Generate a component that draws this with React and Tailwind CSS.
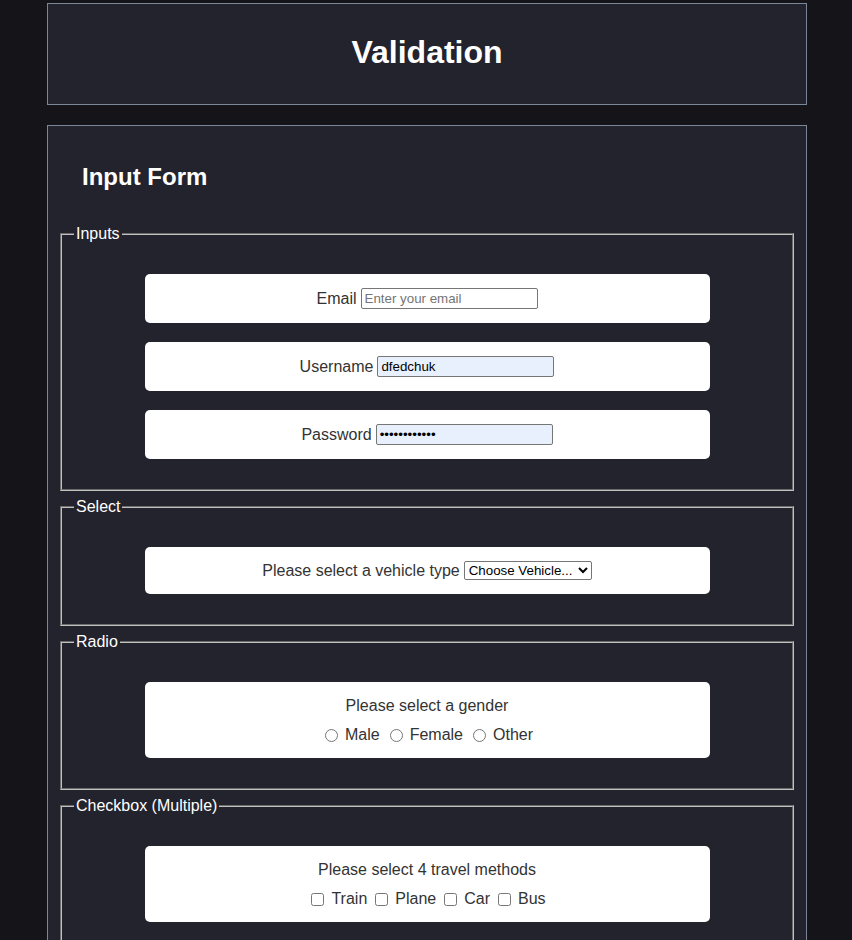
import React from "react";

function Fieldset({ legend, children }) {
  return (
    <fieldset className="border-2 [border-style:groove] border-[#c0c0c0] px-[12px] pt-[31px] pb-[30px]">
      <legend className="px-[2px] text-[16px] leading-[18px] text-white">{legend}</legend>
      {children}
    </fieldset>
  );
}

const inputCls =
  "w-[177px] h-[21px] border border-[#767676] rounded-[2px] px-[3px] text-[13.33px] text-black outline-none placeholder:text-[#757575] font-['Liberation_Sans',Arial,sans-serif]";

function Row({ label, children }) {
  return (
    <div className="mx-auto flex h-[49px] w-[565px] items-center justify-center gap-[4px] rounded-[5px] bg-white text-[16px] leading-[18px] text-[#333]">
      <span>{label}</span>
      {children}
    </div>
  );
}

export default function App() {
  return (
    <div className="min-h-screen bg-[#151519] pt-[3px] pb-[20px] font-['Liberation_Sans',Arial,sans-serif]">
      <div className="ml-[47px] h-[102px] w-[760px] border border-[#7b8797] bg-[#23232d] pt-[28px] text-center">
        <h1 className="text-[32px] font-bold leading-[40px] text-white">Validation</h1>
      </div>

      <div className="ml-[47px] mt-[20px] w-[760px] border border-[#7b8797] bg-[#23232d] px-[12px] pt-[35px] pb-[13px]">
        <h2 className="ml-[22px] text-[24px] font-bold leading-[32px] text-white">Input Form</h2>

        <div className="mt-[32px] flex flex-col gap-[7px]">
          <Fieldset legend="Inputs">
            <div className="flex flex-col gap-[19px]">
              <Row label="Email">
                <input type="email" placeholder="Enter your email" className={inputCls + " bg-white"} />
              </Row>
              <Row label="Username">
                <input type="text" defaultValue="dfedchuk" className={inputCls + " bg-[#e8f0fe]"} />
              </Row>
              <Row label="Password">
                <input type="password" defaultValue="dfedchuk1234" className={inputCls + " bg-[#e8f0fe]"} />
              </Row>
            </div>
          </Fieldset>

          <Fieldset legend="Select">
            <div className="mx-auto flex h-[47px] w-[565px] items-center justify-center gap-[4px] rounded-[5px] bg-white text-[16px] leading-[18px] text-[#333]">
              <span>Please select a vehicle type</span>
              <select
                defaultValue=""
                className="h-[19px] w-[128px] rounded-[2px] border border-[#767676] bg-white text-[13.33px] text-black outline-none font-['Liberation_Sans',Arial,sans-serif]"
              >
                <option value="">Choose Vehicle...</option>
                <option value="car">Car</option>
                <option value="truck">Truck</option>
              </select>
            </div>
          </Fieldset>

          <Fieldset legend="Radio">
            <div className="mx-auto flex h-[76px] w-[565px] flex-col items-center gap-[11px] rounded-[5px] bg-white pt-[15px] text-[16px] leading-[18px] text-[#333]">
              <div>Please select a gender</div>
              <div className="flex items-center pl-[4px]">
                {["Male", "Female", "Other"].map((g, i) => (
                  <label key={g} className={"flex items-center " + (i > 0 ? "ml-[10px]" : "")}>
                    <input type="radio" name="gender" className="m-0 h-[13px] w-[13px]" />
                    <span className="ml-[7px]">{g}</span>
                  </label>
                ))}
              </div>
            </div>
          </Fieldset>

          <Fieldset legend="Checkbox (Multiple)">
            <div className="mx-auto flex h-[76px] w-[565px] flex-col items-center gap-[11px] rounded-[5px] bg-white pt-[15px] text-[16px] leading-[18px] text-[#333]">
              <div>Please select 4 travel methods</div>
              <div className="flex items-center pl-[3px]">
                {["Train", "Plane", "Car", "Bus"].map((g, i) => (
                  <label key={g} className={"flex items-center " + (i > 0 ? "ml-[8px]" : "")}>
                    <input type="checkbox" className="m-0 h-[13px] w-[13px]" />
                    <span className="ml-[7px]">{g}</span>
                  </label>
                ))}
              </div>
            </div>
          </Fieldset>
        </div>
      </div>
    </div>
  );
}
